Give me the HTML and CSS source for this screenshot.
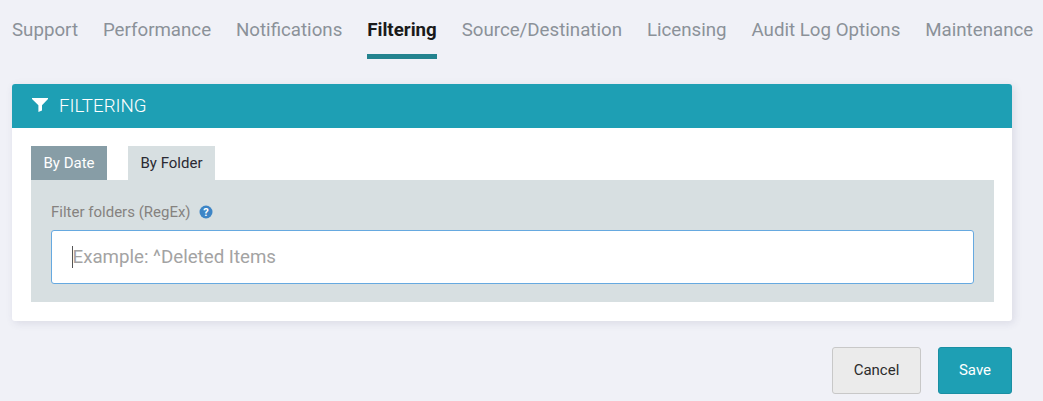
FILE: index.html
```html
<!DOCTYPE html>
<html lang="en">
<head>
<meta charset="utf-8">
<title>Filtering</title>
<link rel="stylesheet" href="styles.css">
</head>
<body>
<nav class="nav">
  <a class="nav-item">Support</a>
  <a class="nav-item">Performance</a>
  <a class="nav-item">Notifications</a>
  <a class="nav-item active">Filtering</a>
  <a class="nav-item">Source/Destination</a>
  <a class="nav-item">Licensing</a>
  <a class="nav-item">Audit Log Options</a>
  <a class="nav-item">Maintenance</a>
</nav>
<section class="card">
  <header class="card-head">
    <svg class="funnel" viewBox="0 0 16 14" width="16" height="14"><path d="M0 0H16V1L10 7.2V12.5L6.4 14V7.2L0 1Z" fill="#fff"/></svg>
    <span>FILTERING</span>
  </header>
  <div class="card-body">
    <div class="tabs">
      <div class="tab tab-dark">By Date</div>
      <div class="tab tab-light">By Folder</div>
    </div>
    <div class="panel">
      <div class="label-row">
        <span class="label">Filter folders (RegEx)</span>
        <svg class="help" viewBox="0 0 14 14" width="14" height="14"><circle cx="7" cy="7" r="6.5" fill="#3d85c6"/><text x="7" y="10.6" text-anchor="middle" class="help-q">?</text></svg>
      </div>
      <div class="input"><span class="caret"></span><span class="placeholder">Example: ^Deleted Items</span></div>
    </div>
  </div>
</section>
<footer class="actions">
  <button class="btn btn-cancel">Cancel</button>
  <button class="btn btn-save">Save</button>
</footer>
</body>
</html>
```
FILE: styles.css
```css
* { box-sizing: border-box; }
html, body { height: 100%; }
body {
  margin: 0;
  background: #f0f1f7;
  font-family: Roboto, "Liberation Sans", sans-serif;
  overflow: hidden;
  padding: 0 31px 0 12px;
}
.nav {
  display: flex;
  gap: 24.9px;
  height: 59px;
  white-space: nowrap;
}
.nav-item {
  font-size: 18.72px;
  line-height: 21px;
  padding-top: 20px;
  color: #8b9199;
  height: 59px;
}
.nav-item.active {
  color: #1a1a1a;
  font-weight: 700;
  border-bottom: 5px solid #23838f;
}
.card {
  margin-top: 25px;
  width: 1000px;
  background: #fff;
  border-radius: 3px;
  box-shadow: 2px 2px 8px rgba(60, 60, 100, 0.12);
  height: 237px;
}
.card-head {
  height: 44px;
  background: #1e9fb4;
  border-radius: 3px 3px 0 0;
  color: #fff;
  display: flex;
  align-items: center;
  padding-left: 20px;
  font-size: 18.72px;
  font-weight: 300;
}
.funnel { margin-right: 11px; margin-top: -2px; }
.card-body { padding: 18px 18px 0 19px; }
.tabs { display: flex; gap: 21px; height: 34px; }
.tab {
  font-size: 15px;
  line-height: 34px;
  text-align: center;
}
.tab-dark { width: 76px; background: #879da6; color: #fff; }
.tab-light { width: 87px; background: #d7dfe1; color: #2a2a33; }
.panel {
  background: #d7dfe1;
  height: 122px;
  padding: 20px 20px 0;
}
.label-row { display: flex; align-items: center; gap: 8px; height: 30px; padding-bottom: 6px; }
.label { font-size: 15px; color: #85827f; }
.help { margin-top: 0; }
.help-q { font: 700 11px Roboto, sans-serif; fill: #fff; }
.input {
  height: 54px;
  background: #fff;
  border: 1px solid #66a9e0;
  border-radius: 3px;
  display: flex;
  align-items: center;
  padding-left: 20px;
  position: relative;
}
.caret { width: 1px; height: 22px; background: #555; }
.placeholder { font-size: 18.72px; color: #a3a3a3; margin-left: -0.5px; }
.actions {
  display: flex;
  justify-content: flex-end;
  gap: 17px;
  width: 1000px;
  margin-top: 26px;
}
.btn {
  height: 47px;
  border-radius: 3px;
  font-family: inherit;
  font-size: 15px;
  padding: 0 0 2px;
}
.btn-cancel { width: 89px; background: #ebebeb; border: 1px solid #c8c8c8; color: #2b2b2b; }
.btn-save { width: 74px; background: #1e9fb4; border: 1px solid #1a8fa3; color: #fff; }
```
